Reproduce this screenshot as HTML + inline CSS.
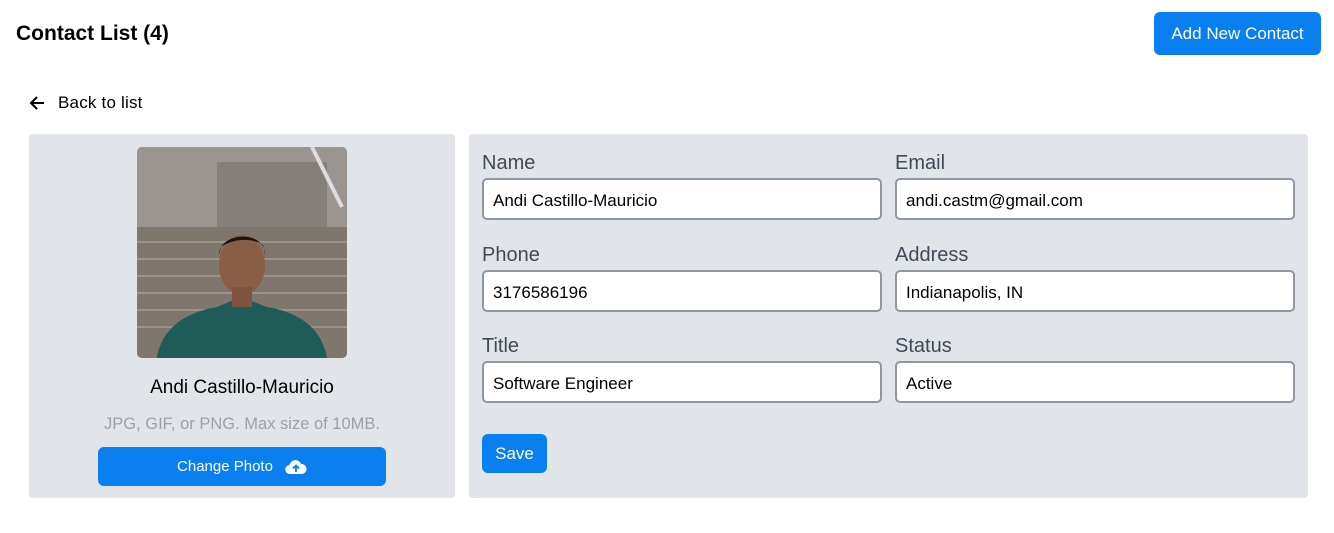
<!DOCTYPE html>
<html><head><style>
*{box-sizing:border-box;margin:0;padding:0}
body{width:1334px;height:533px;background:#fff;font-family:"Liberation Sans",sans-serif;position:relative;overflow:hidden}
.abs{position:absolute}
h1{position:absolute;left:16px;top:22px;font-size:21px;font-weight:bold;color:#000}
.btn{position:absolute;background:#0a7ff0;color:#fff;border-radius:6px;display:flex;align-items:center;justify-content:center}
.panel{position:absolute;background:#e1e4e9;border-radius:4px}
.lbl{position:absolute;font-size:20px;color:#3f4a57}
.inp{position:absolute;height:42px;border:2px solid #8e97a3;border-radius:5px;background:#fff;font-size:17px;color:#000;padding-left:9px;padding-top:3px;display:flex;align-items:center}
</style></head><body>
<h1>Contact List (4)</h1>
<div class="btn" style="left:1154px;top:12px;width:167px;height:43px;font-size:17px;padding-top:1px">Add New Contact</div>
<svg class="abs" style="left:28px;top:95px" width="18" height="16" viewBox="0 0 18 16"><path d="M16 8H3M9 2L3 8l6 6" stroke="#000" stroke-width="2" fill="none"/></svg>
<div class="abs" style="left:58px;top:93px;font-size:17px;letter-spacing:0.2px">Back to list</div>
<div class="panel" style="left:29px;top:134px;width:426px;height:364px"></div>
<svg class="abs" style="left:137px;top:147px;border-radius:5px" width="210" height="211" viewBox="0 0 210 211">
<rect width="210" height="211" fill="#8b8683"/>
<rect y="0" width="210" height="80" fill="#9a9591"/>
<rect x="80" y="15" width="110" height="65" fill="#857f79"/>
<rect y="80" width="210" height="131" fill="#7f766e"/>
<g stroke="#9b9188" stroke-width="2"><path d="M0 95H210M0 112H210M0 129H210M0 146H210M0 163H210M0 180H210"/></g>
<path d="M175 0L205 60" stroke="#ddd" stroke-width="4"/>
<path d="M20 211C25 180 50 165 80 160L104 150L130 160C160 165 185 180 190 211Z" fill="#1f5b57"/>
<ellipse cx="105" cy="118" rx="23" ry="30" fill="#8a5d45"/>
<path d="M82 108C82 85 128 82 128 108L126 98C115 90 95 92 84 100Z" fill="#1a1410"/>
<rect x="95" y="140" width="20" height="20" fill="#7e5440"/>
</svg>
<div class="abs" style="left:29px;width:426px;top:377px;text-align:center;font-size:19px;color:#000">Andi Castillo-Mauricio</div>
<div class="abs" style="left:29px;width:426px;top:415px;text-align:center;font-size:16.5px;color:#9aa1ab">JPG, GIF, or PNG. Max size of 10MB.</div>
<div class="btn" style="left:98px;top:447px;width:288px;height:39px;font-size:15px">Change Photo
<svg style="margin-left:12px" width="22" height="16" viewBox="0 0 22 16"><path d="M5 15a4.5 4.5 0 0 1-.5-9A6 6 0 0 1 16 5a4.5 4.5 0 0 1 1 10Z" fill="#fff"/><path d="M11 13V7M8 9.5l3-3 3 3" stroke="#0a7ff0" stroke-width="1.8" fill="none"/></svg></div>
<div class="panel" style="left:469px;top:134px;width:839px;height:364px"></div>
<div class="lbl" style="left:482px;top:152px">Name</div>
<div class="lbl" style="left:895px;top:152px">Email</div>
<div class="inp" style="left:482px;top:178px;width:400px">Andi Castillo-Mauricio</div>
<div class="inp" style="left:895px;top:178px;width:400px">andi.castm@gmail.com</div>
<div class="lbl" style="left:482px;top:244px">Phone</div>
<div class="lbl" style="left:895px;top:244px">Address</div>
<div class="inp" style="left:482px;top:270px;width:400px">3176586196</div>
<div class="inp" style="left:895px;top:270px;width:400px">Indianapolis, IN</div>
<div class="lbl" style="left:482px;top:335px">Title</div>
<div class="lbl" style="left:895px;top:335px">Status</div>
<div class="inp" style="left:482px;top:361px;width:400px">Software Engineer</div>
<div class="inp" style="left:895px;top:361px;width:400px">Active</div>
<div class="btn" style="left:482px;top:434px;width:65px;height:39px;font-size:17px">Save</div>
</body></html>
